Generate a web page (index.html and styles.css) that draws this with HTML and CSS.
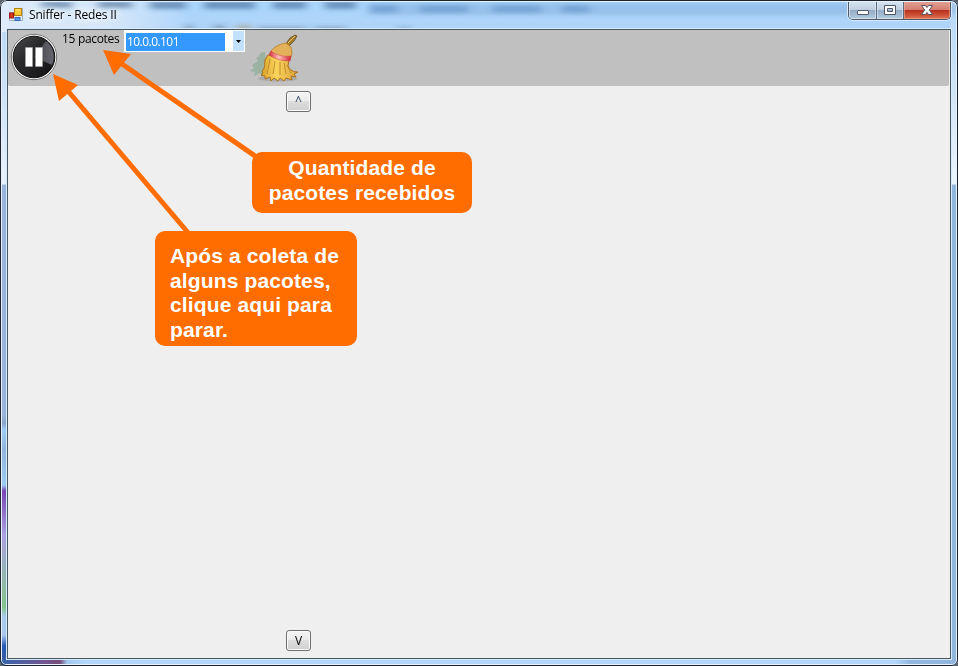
FILE: index.html
```html
<!DOCTYPE html>
<html lang="pt-BR">
<head>
<meta charset="utf-8">
<title>Sniffer - Redes II</title>
<link rel="stylesheet" href="styles.css">
</head>
<body>
<div class="window">
  <svg class="glass" width="958" height="32" viewBox="0 0 958 32" aria-hidden="true">
    <defs><filter id="soft" x="-20%" y="-100%" width="140%" height="300%"><feGaussianBlur stdDeviation="4 2"/></filter><linearGradient id="haze"><stop stop-color="#e8f0f9" stop-opacity=".8"/><stop offset=".6" stop-color="#e8f0f9" stop-opacity=".65"/><stop offset="1" stop-color="#e8f0f9" stop-opacity="0"/></linearGradient></defs>
    <path fill="url(#haze)" d="M0 0H190V32H0z"/>
    <g filter="url(#soft)">
      <path fill="#4778ad" opacity=".22" d="M368 3H958V15H368z"/>
      <path fill="#375c88" opacity=".55" d="M42 1h30v7H42zM98 1h34v7H98zM150 1h36v8h-36zM204 1h51v8h-51zM273 1h33v8h-33zM325 1h31v8h-31z"/>
      <path fill="#4877b5" opacity=".38" d="M370 5h28v8h-28zM420 5h48v8h-48zM493 5h48v8h-48zM562 5h27v8h-27z"/>
      <path fill="#3d5267" opacity=".4" d="M186 25h7v7h-7zM214 25h11v7h-11zM258 27h48v5h-48zM315 27h30v5h-30zM400 27h8v5h-8z"/>
      <path fill="#a58e67" opacity=".55" d="M237 25h13v7h-13z"/>
    </g>
  </svg>
  <header class="titlebar">
    <svg class="app-icon" width="14" height="14" viewBox="0 0 14 14">
      <path fill="#e8edf3" stroke="#a5afba" d="M.5 4.500h5V.5h8v12H.5z"/>
      <rect x="5.500" y=".5" width="7" height="7" fill="#f7c936" stroke="#b98208"/><path d="M7 2h4" stroke="#fff08c"/>
      <rect x=".5" y="5" width="4" height="5" fill="#d9351e" stroke="#9e1918"/>
      <rect x="6" y="9.500" width="5" height="3" fill="#5799ee" stroke="#326ab7"/>
    </svg>
    <h1 class="title">Sniffer - Redes II</h1>
    <div class="controls">
      <button class="control minimize" aria-label="Minimizar"><svg width="14" height="14"><rect x="1.500" y="7.500" width="11" height="4" rx=".5" fill="#fff" stroke="#51566b"/></svg></button>
      <button class="control maximize" aria-label="Maximizar"><svg width="14" height="14"><path fill="#fff" fill-rule="evenodd" stroke="#51566b" d="M1.500 2.500h11v9h-11zM4.500 5.500v3h5v-3z"/></svg></button>
      <button class="control close" aria-label="Fechar"><svg width="14" height="14"><path fill="#fff" stroke="#56505f" stroke-linejoin="round" d="M1.500 2.500h4L7 4.500l1.500-2h4L9.300 7l3.200 4.500h-4L7 9.500l-1.500 2h-4L4.700 7z"/></svg></button>
    </div>
  </header>
  <main class="client">
    <div class="toolbar">
      <button class="pause" aria-label="Pausar">
        <svg width="48" height="48" viewBox="0 0 48 48">
          <defs><linearGradient id="disc" x1="0" y1="0" x2="1" y2="1"><stop stop-color="#4d4d50"/><stop offset=".4" stop-color="#29292b"/><stop offset="1" stop-color="#111113"/></linearGradient><linearGradient id="shine" x2="1"><stop stop-color="#45454b"/><stop offset="1" stop-color="#73747f"/></linearGradient></defs>
          <circle cx="24" cy="24" r="22.700" fill="#fff" stroke="#777" stroke-width="1"/>
          <circle cx="24" cy="24" r="20.800" fill="url(#disc)" stroke="#111" stroke-width="1"/>
          <path d="M24 24 36 8A20 20 0 0 1 42 32z" fill="url(#shine)" opacity=".85"/>
          <path d="M15.500 14.500h7v19h-7zM25.500 14.500h7v19h-7z" fill="#fff" stroke="#aaa" stroke-width=".5"/>
        </svg>
      </button>
      <span class="count">15 pacotes</span>
      <div class="combo"><span class="selection">10.0.0.101</span><span class="drop"><svg width="5" height="3"><path d="M0 0h5L2.500 3z"/></svg></span></div>
      <button class="clean" aria-label="Limpar">
        <svg width="50" height="50" viewBox="0 0 50 50">
          <defs><linearGradient id="straw"><stop stop-color="#d99e27"/><stop offset=".4" stop-color="#f9d35c"/><stop offset="1" stop-color="#dca23b"/></linearGradient><linearGradient id="band"><stop stop-color="#d52b37"/><stop offset=".45" stop-color="#ffc1bd"/><stop offset="1" stop-color="#d21f33"/></linearGradient></defs>
          <ellipse cx="28" cy="44.500" rx="20" ry="3" fill="#777" opacity=".3"/>
          <path d="M15 18C8 18 10 23 6 24l2 3-6 4 2 3-4 3 5 1-1 4 6-3 2 5 5-9z" fill="#84aa91" opacity=".6"/>
          <path d="m35 11 5-7 5-3 2 1-3 5-6 6z" fill="#a87d28" stroke="#5e491f" stroke-width=".8"/><path d="m38 9 7-7" stroke="#e4c372"/>
          <path d="M20 19C22 14 29 10 36 9l5 4 1 6-2 7-20-5z" fill="#e3b15a" stroke="#b67926" stroke-width=".8"/>
          <path d="M18 21 39 26l-1 6c2 4 5 6 10 6l-4 2 2 3-5-1 1 4-6-2-2 3-4-3-2 3-4-3-3 3-1-4-5 2v-3l-4-1 2-2-1-2c4-4 2-7 3-11z" fill="url(#straw)" stroke="#ac711c" stroke-width="1"/>
          <path d="M20 25 17 40M25 27l-2 13M30 28v13M34 29l2 11M37 31l4 8" fill="none" stroke="#b78023" stroke-width=".8"/>
          <path d="m21 17c5 4 12 6 20 5l-1 5c-8 0-15-2-21-6z" fill="url(#band)" stroke="#c94044" stroke-width=".5"/>
        </svg>
      </button>
    </div>
    <div class="content">
      <button class="scroll-button up">^</button>
      <button class="scroll-button down">V</button>
    </div>
  </main>
  <svg class="arrows" width="958" height="666" viewBox="0 0 958 666" aria-hidden="true">
    <g fill="#ff6c00" stroke="#ff6c00"><path stroke-width="5" d="M122 64 258 158M68 91 190 235"/><path stroke="none" d="m103 50 28 4-17 21zM53 74l25 11-19 16z"/></g>
  </svg>
  <aside class="note received">Quantidade de<br>pacotes recebidos</aside>
  <aside class="note stop">Após a coleta de<br>alguns pacotes,<br>clique aqui para<br>parar.</aside>
</div>
</body>
</html>
```
FILE: styles.css
```css
* { box-sizing: border-box; }
html { background: #59616a; }
body { margin: 0; overflow: hidden; font-family: "Open Sans", "Noto Sans", sans-serif; }
button { margin: 0; padding: 0; font: inherit; }
.window {
  position: relative;
  width: 958px;
  height: 666px;
  display: flex;
  flex-direction: column;
  padding: 1px 7px 7px;
  overflow: hidden;
  border-radius: 7px 7px 6px 6px;
  background:
    linear-gradient(90deg, #3465ae, #71558f 45px, #774b79 60px, #9fc8ee 67px, #b3d7fc 85px, #b3d7fc 895px, #91b7df 910px) 0 659px / 100% 7px no-repeat,
    linear-gradient(#b5d5f4, #c3dcf5 55px, #e9f2fc 184px, #97b5dc 185px, #97b5dc 415px, #89a4ca 423px, #9dccf3 430px, #91b4de 450px, #9ccaf0 485px, #7846b5 491px, #aaa0df 535px, #83c58a 607px, #a9c9ef 617px, #a7c6ed 635px, #2859b5 646px, #415c95 666px) 0 0 / 8px 100% no-repeat,
    linear-gradient(#b5d8f9, #c7dff6 60px, #ebf4fc 184px, #91b7df 185px) 950px 0 / 8px 100% no-repeat,
    linear-gradient(#abd7ff, #afd3f7 30px, #b4d6f7);
}
.window::after {
  content: "";
  position: absolute;
  inset: 0;
  border: 1px solid #20232c;
  border-radius: inherit;
  box-shadow: inset 0 0 0 1px #e3f3ff;
  pointer-events: none;
}
.glass { position: absolute; inset: 0 auto auto 0; }
.titlebar { position: relative; flex: none; height: 28px; display: flex; align-items: flex-start; padding: 0 0 0 2px; }
.app-icon { margin-top: 7px; }
.title { margin: 4px 0 0 6px; font-size: 12px; line-height: 20px; font-weight: 400; letter-spacing: -.16px; white-space: nowrap; color: #000; text-shadow: 0 0 6px #fff, 0 0 8px #fff; }
.controls { display: flex; height: 19px; margin-left: auto; border: 1px solid #4c596b; border-top: 0; border-radius: 0 0 5px 5px; overflow: hidden; box-shadow: 0 0 0 1px #d7eaff; }
.control { width: 27px; border: 0; border-right: 1px solid #5c697d; display: flex; align-items: center; justify-content: center; background: linear-gradient(#d8e5f2, #bfcfdf 48%, #93aac4 50%, #b2ccdf); box-shadow: inset 0 0 0 1px #e0ecf7aa; }
.minimize { width: 28px; }
.close { width: 46px; border-right: 0; background: linear-gradient(#e3a597, #d47d70 48%, #b52d1e 50%, #ce5439 80%, #df7653); box-shadow: inset 0 0 0 1px #f0b5a788; }
.client { position: relative; flex: 1; display: flex; flex-direction: column; border: 1px solid #465663; background: #efefef; box-shadow: 0 0 0 1px #d9ebfb; }
.toolbar { flex: none; height: 56px; display: flex; align-items: flex-start; background: #c0c0c0; border-right: 1px solid #eee; border-radius: 0 0 3px 2px; }
.pause { width: 48px; height: 48px; margin: 3px 0 0 2px; border: 0; background: none; }
.pause svg, .clean svg { display: block; }
.count { width: 62px; margin-left: 4px; font-size: 12px; line-height: 18px; letter-spacing: -.32px; white-space: nowrap; }
.combo { width: 121px; height: 22px; display: flex; align-items: stretch; justify-content: space-between; background: #fff; border: 1px solid #fff; }
.selection { width: 99px; height: 18px; margin: 2px 0 0 1px; padding-left: 1px; background: #3399ff; color: #fff; font-size: 12px; line-height: 18px; letter-spacing: -.55px; }
.drop { width: 11px; display: grid; place-items: center; background: #c2e0ff; }
.clean { width: 50px; height: 50px; margin: 4px 0 0 5px; border: 0; background: none; }
.content { flex: 1; display: flex; flex-direction: column; justify-content: space-between; padding: 5px 0 7px 278px; }
.scroll-button { width: 25px; height: 21px; border: 1px solid #707070; border-radius: 3px; background: linear-gradient(#f3f3f3, #ebebeb 48%, #dddddd 50%, #cfcfcf); box-shadow: inset 0 0 0 1px #fafafa; font-size: 12px; line-height: 18px; text-align: center; }
.up { color: #253957; line-height: 15px; padding-bottom: 3px; }
.arrows { position: absolute; inset: 0; pointer-events: none; }
.note { position: absolute; border-radius: 10px; background: #ff6c00; color: #fff; font: bold 21px/24.6px "Liberation Sans", Arial, sans-serif; white-space: nowrap; }
.received { left: 252px; top: 152px; width: 220px; height: 61px; padding: 4px 0 0; text-align: center; letter-spacing: .13px; }
.stop { left: 155px; top: 231px; width: 202px; height: 115px; padding: 13px 0 0 15px; letter-spacing: .13px; }
```
